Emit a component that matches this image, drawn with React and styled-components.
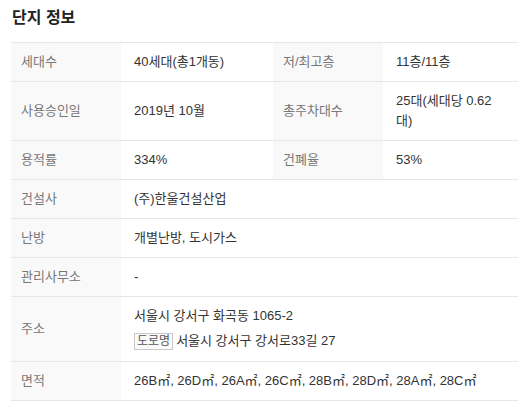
import React from 'react'
import styled, { createGlobalStyle } from 'styled-components'

const GlobalStyle = createGlobalStyle`
    body {
        margin: 0;
        background: #fff;
        font-family: "Liberation Sans", "Noto Sans CJK KR", sans-serif;
        color: #333;
    }
`
const Section = styled.section`
    width: 507px;
    padding: 6px 11px 0;
`
const Title = styled.h2`
    margin: 0 0 12px;
    font-size: 16px;
    line-height: 24px;
    font-weight: 700;
    color: #222;
    padding-left: 1px;
`
const Table = styled.div`
    border-top: 1px solid #e6e6e6;
`
const Row = styled.div`
    display: grid;
    grid-template-columns: 110px 152px 110px 135px;
    border-bottom: 1px solid #e6e6e6;
`
const Label = styled.div`
    display: flex;
    align-items: center;
    padding: 9px 10px;
    background: #f9f9f9;
    color: #777;
    font-size: 13px;
    line-height: 20px;
`
const Value = styled.div`
    display: flex;
    flex-direction: column;
    justify-content: center;
    padding: 9px 13px;
    color: #333;
    font-size: 13px;
    line-height: 20px;
    grid-column: ${props => props.$wide ? 'span 3' : 'auto'};
`
const Line = styled.div`
    margin-top: ${props => props.$gap || 0}px;
    line-height: ${props => props.$lh || 20}px;
`
const Badge = styled.span`
    display: inline-block;
    margin-right: 3px;
    padding: 0 2px;
    border: 1px solid #c9c9c9;
    background: #fafafa;
    color: #555;
    font-size: 12px;
    line-height: 15px;
`

const App = () => {
  return (
    <>
      <GlobalStyle />
      <Section>
        <Title>단지 정보</Title>
        <Table>
          <Row>
            <Label>세대수</Label>
            <Value>40세대(총1개동)</Value>
            <Label>저/최고층</Label>
            <Value>11층/11층</Value>
          </Row>
          <Row>
            <Label>사용승인일</Label>
            <Value>2019년 10월</Value>
            <Label>총주차대수</Label>
            <Value>25대(세대당 0.62 대)</Value>
          </Row>
          <Row>
            <Label>용적률</Label>
            <Value>334%</Value>
            <Label>건폐율</Label>
            <Value>53%</Value>
          </Row>
          <Row>
            <Label>건설사</Label>
            <Value $wide>(주)한울건설산업</Value>
          </Row>
          <Row>
            <Label>난방</Label>
            <Value $wide>개별난방, 도시가스</Value>
          </Row>
          <Row>
            <Label>관리사무소</Label>
            <Value $wide>-</Value>
          </Row>
          <Row>
            <Label>주소</Label>
            <Value $wide>
              <Line>서울시 강서구 화곡동 1065-2</Line>
              <Line $gap={3} $lh={23}><Badge>도로명</Badge>서울시 강서구 강서로33길 27</Line>
            </Value>
          </Row>
          <Row>
            <Label>면적</Label>
            <Value $wide>26B㎡, 26D㎡, 26A㎡, 26C㎡, 28B㎡, 28D㎡, 28A㎡, 28C㎡</Value>
          </Row>
        </Table>
      </Section>
    </>
  )
}

export default App
